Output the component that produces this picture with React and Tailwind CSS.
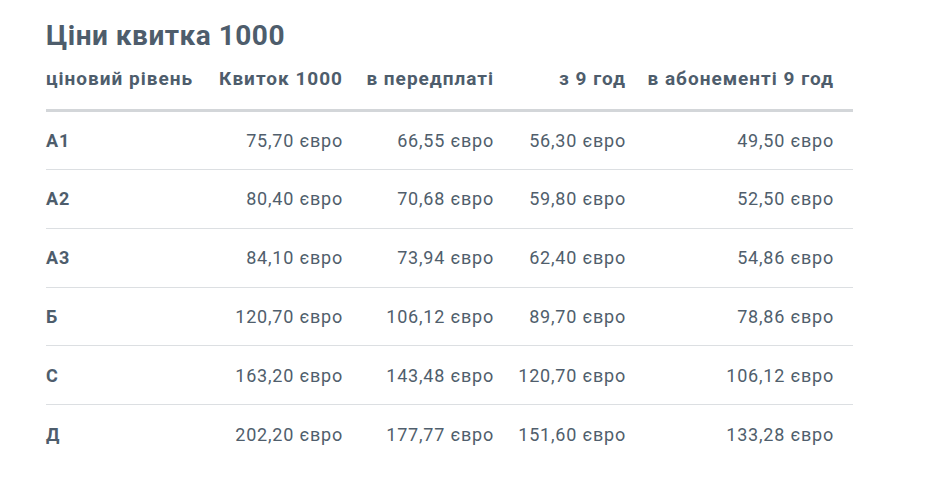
import React from "react";

const rows = [
  ["А1", "75,70 євро", "66,55 євро", "56,30 євро", "49,50 євро"],
  ["А2", "80,40 євро", "70,68 євро", "59,80 євро", "52,50 євро"],
  ["А3", "84,10 євро", "73,94 євро", "62,40 євро", "54,86 євро"],
  ["Б", "120,70 євро", "106,12 євро", "89,70 євро", "78,86 євро"],
  ["С", "163,20 євро", "143,48 євро", "120,70 євро", "106,12 євро"],
  ["Д", "202,20 євро", "177,77 євро", "151,60 євро", "133,28 євро"],
];

const headers = ["ціновий рівень", "Квиток 1000", "в передплаті", "з 9 год", "в абонементі 9 год"];
const widths = ["w-[154px]", "w-[162px]", "w-[151px]", "w-[132px]", "w-[208px]"];

const App = () => {
  return (
    <div className="bg-white min-h-[501px] pl-[46px] pt-[19px] text-[#4e5d6c]" style={{ fontFamily: "Roboto, sans-serif" }}>
      <h2 className="text-[28px] font-bold leading-[34px] tracking-[0.5px]">Ціни квитка 1000</h2>
      <table className="w-[807px] table-fixed border-collapse mt-[8px]">
        <thead>
          <tr className="border-b-[3px] border-[#d3d6d9]">
            {headers.map((h, i) => (
              <th
                key={h}
                className={`${widths[i]} h-[49px] pb-[11px] text-[19px] font-bold tracking-[1px] ${i === 0 ? "text-left" : "text-right pr-[19px]"}`}
              >
                {h}
              </th>
            ))}
          </tr>
        </thead>
        <tbody>
          {rows.map((row, ri) => (
            <tr key={row[0]} className={ri < rows.length - 1 ? "border-b border-[#dcdfe2]" : ""}>
              {row.map((cell, i) => (
                <td
                  key={i}
                  className={`text-[18px] tracking-[0.8px] ${ri === 0 ? "h-[59.5px] pt-[1px]" : "h-[58.75px]"} ${i === 0 ? "text-left font-bold" : "text-right pr-[19px] text-[#505e6c]"}`}
                >
                  {cell}
                </td>
              ))}
            </tr>
          ))}
        </tbody>
      </table>
    </div>
  );
};

export default App;
